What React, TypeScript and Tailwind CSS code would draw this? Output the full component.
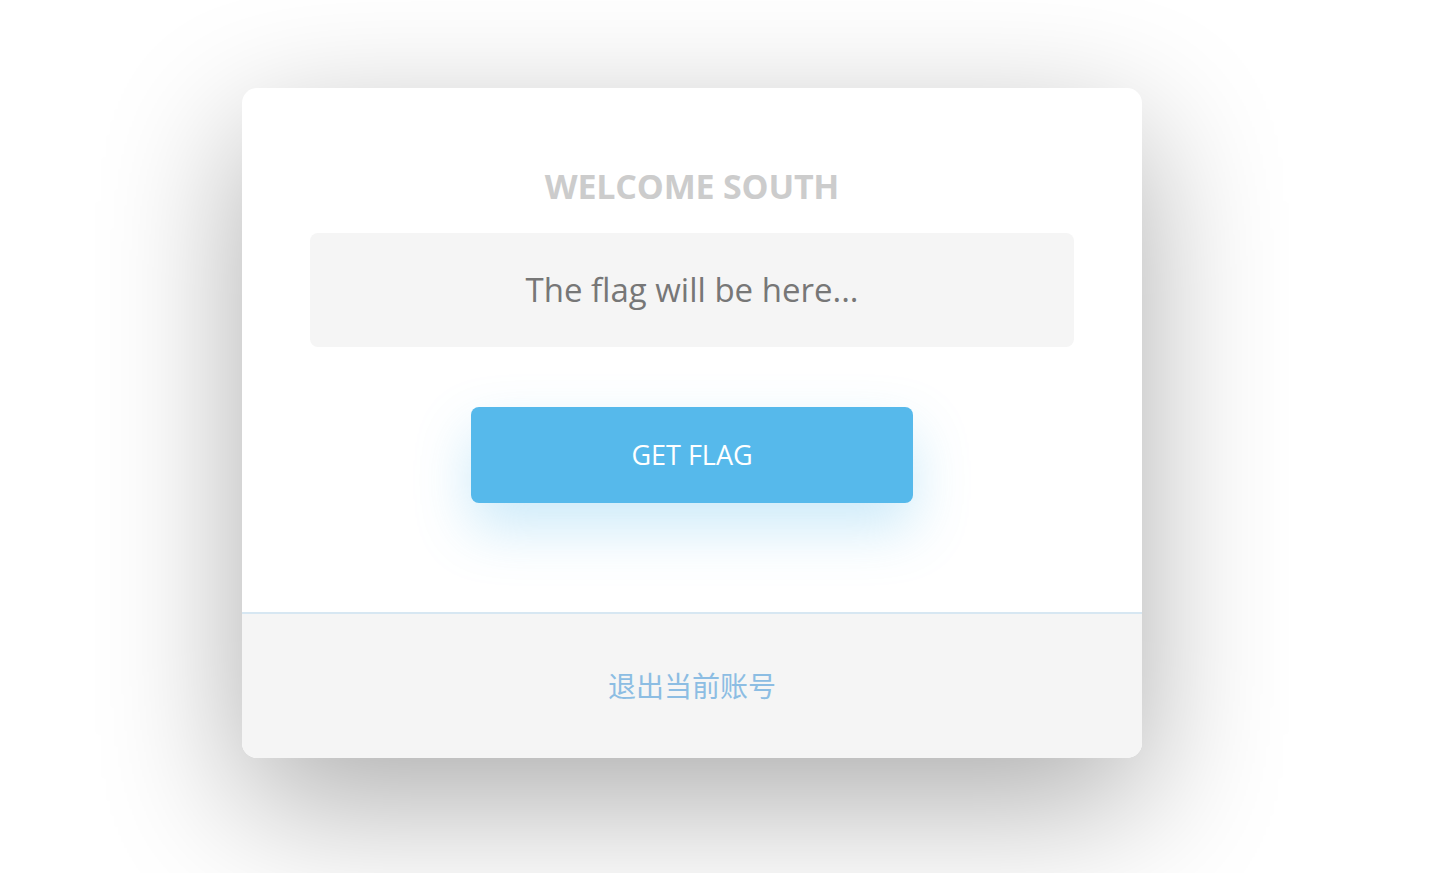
export default function App() {
	return (
		<div className="min-h-screen overflow-hidden bg-white pl-[242px] pt-[88px] font-['Open_Sans','Noto_Sans_CJK_SC',sans-serif]">
			<div className="w-[900px] overflow-hidden rounded-[15px] bg-white shadow-[0_45px_140px_rgba(0,0,0,0.33)]">
				<div className="flex flex-col items-center px-[68px] pb-[109px] pt-[81px]">
					<h1 className="h-[34px] text-[34px] font-bold leading-none tracking-[-0.2px] text-[#cccccc]">WELCOME SOUTH</h1>
					<div className="mt-[30px] flex h-[114px] w-full items-center justify-center rounded-[8px] bg-[#f5f5f5] text-[33px] text-[#777777]">
						The flag will be here...
					</div>
					<button className="mt-[60px] h-[96px] w-[442px] rounded-[8px] bg-[#56b9eb] text-[27px] text-white shadow-[0_25px_55px_rgba(86,185,234,0.3)]">
						GET FLAG
					</button>
				</div>
				<div className="flex h-[146px] items-center justify-center border-t-2 border-[#d7e7f2] bg-[#f5f5f5] text-[28px] text-[#8cbde3]">
					退出当前账号
				</div>
			</div>
		</div>
	);
}
